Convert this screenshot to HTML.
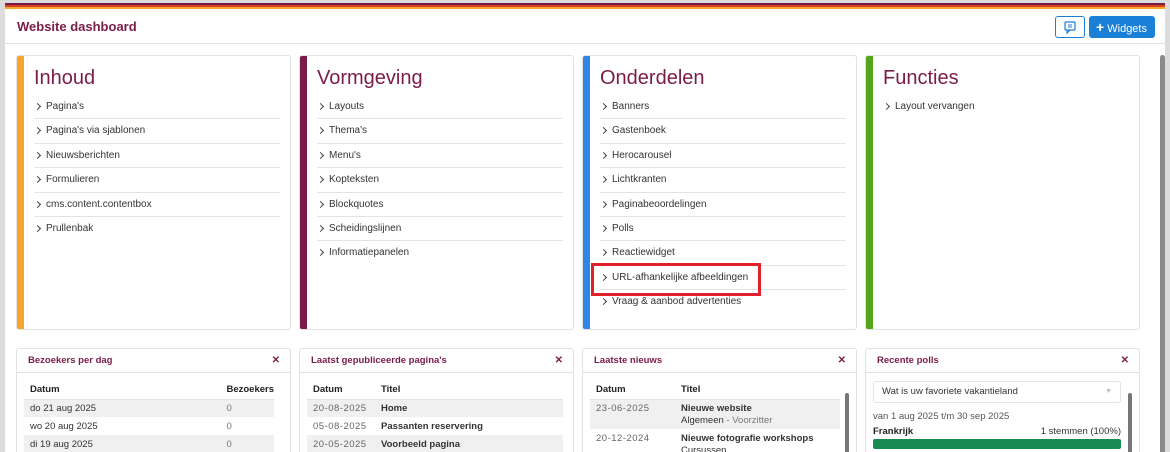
<!DOCTYPE html>
<html><head><style>
*{box-sizing:border-box;margin:0;padding:0}
html,body{width:1170px;height:452px;overflow:hidden}
body{background:#dcdcdc;font-family:"Liberation Sans",Arial,sans-serif;position:relative}
.panel{position:absolute;left:5px;top:3px;width:1160px;height:449px;background:#fff}
.s1{position:absolute;left:0;top:0;width:1160px;height:2px;background:#7a1c48}
.s2{position:absolute;left:0;top:2px;width:1160px;height:2px;background:#d4431e}
.s3{position:absolute;left:0;top:4px;width:1160px;height:2px;background:#f6a62a}
.hdr{position:absolute;left:0;top:6px;width:1160px;height:35px;border-bottom:1px solid #e2e2e2}
.hdr h1{position:absolute;left:12px;top:10px;font-size:13px;font-weight:bold;color:#7a1c48}
.b1{position:absolute;left:1050px;top:7px;width:30px;height:22px;border:1px solid #1a7fd6;border-radius:3px}
.b2{position:absolute;left:1084px;top:7px;width:66px;height:22px;background:#1a7fd6;border-radius:3px;color:#fff;font-size:11px;line-height:22px;padding-left:7px}
.sb{position:absolute;left:1155px;top:52px;width:5px;height:400px;background:#8a8a8a;border-radius:3px}
.card{position:absolute;top:55px;width:275px;height:275px;border:1px solid #e2e2e2;border-radius:3px;background:#fff;overflow:hidden}
.card .bar{position:absolute;left:0;top:0;width:7px;height:100%}
.card h2{position:absolute;left:17px;top:11px;font-size:20px;font-weight:normal;color:#7a1c48}
.card ul{position:absolute;left:17px;top:39px;width:246px;list-style:none}
.card li{height:24.4px;border-bottom:1px solid #e4e4e4;font-size:10px;color:#333;line-height:23px;padding-left:12px;position:relative}
.card li:last-child{border-bottom:none}
.card li:before{content:"";position:absolute;left:1px;top:9px;width:4px;height:4px;border-right:1px solid #444;border-top:1px solid #444;transform:rotate(45deg)}
.w{position:absolute;top:348px;width:275px;height:110px;border:1px solid #e2e2e2;border-radius:3px;background:#fff;overflow:hidden}
.w .wh{height:24px;border-bottom:1px solid #e2e2e2;font-size:9.5px;font-weight:bold;color:#7a1c48;line-height:23px;padding-left:11px;position:relative}
.w .wh span{position:absolute;right:10px;top:0;font-size:10px}
table{position:absolute;left:7px;top:32px;border-collapse:collapse;font-size:9.5px;color:#333}
td,th{height:18px;padding-left:6px;text-align:left}
th{font-weight:bold;color:#222;border-bottom:1px solid #e2e2e2}
tr.g td{background:#f0f0f0}
.dt{color:#666;letter-spacing:.5px}
</style></head><body>
<div class="panel">
<div class="s1"></div><div class="s2"></div><div class="s3"></div>
<div class="hdr"><h1>Website dashboard</h1>
<div class="b1"><svg width="28" height="20" viewBox="0 0 28 20"><rect x="9" y="5" width="10" height="8" rx="1" fill="none" stroke="#1a7fd6" stroke-width="1.2"/><path d="M11 13v3l3-3" fill="none" stroke="#1a7fd6" stroke-width="1.2"/><path d="M12 8h4M12 10h4" stroke="#1a7fd6"/></svg></div>
<div class="b2"><b style="font-size:14px">+</b> Widgets</div></div>
<div class="sb"></div>
</div>

<div class="card" style="left:16px"><div class="bar" style="background:#f6a62a"></div><h2>Inhoud</h2><ul><li>Pagina's</li><li>Pagina's via sjablonen</li><li>Nieuwsberichten</li><li>Formulieren</li><li>cms.content.contentbox</li><li>Prullenbak</li></ul></div>
<div class="card" style="left:299px"><div class="bar" style="background:#7a1c48"></div><h2>Vormgeving</h2><ul><li>Layouts</li><li>Thema's</li><li>Menu's</li><li>Kopteksten</li><li>Blockquotes</li><li>Scheidingslijnen</li><li>Informatiepanelen</li></ul></div>
<div class="card" style="left:582px"><div class="bar" style="background:#2f86e6"></div><h2>Onderdelen</h2><ul><li>Banners</li><li>Gastenboek</li><li>Herocarousel</li><li>Lichtkranten</li><li>Paginabeoordelingen</li><li>Polls</li><li>Reactiewidget</li><li>URL-afhankelijke afbeeldingen</li><li>Vraag &amp; aanbod advertenties</li></ul></div>
<div class="card" style="left:865px"><div class="bar" style="background:#55a51c"></div><h2>Functies</h2><ul><li>Layout vervangen</li></ul></div>
<div style="position:absolute;left:591px;top:263px;width:170px;height:33px;border:3px solid #e0202a"></div>

<div class="w" style="left:16px"><div class="wh">Bezoekers per dag<span>✕</span></div>
<table style="width:250px"><tr><th>Datum</th><th style="width:50px">Bezoekers</th></tr><tr class="g"><td>do 21 aug 2025</td><td style="color:#777">0</td></tr><tr><td>wo 20 aug 2025</td><td style="color:#777">0</td></tr><tr class="g"><td>di 19 aug 2025</td><td style="color:#777">0</td></tr></table></div>
<div class="w" style="left:299px"><div class="wh">Laatst gepubliceerde pagina's<span>✕</span></div>
<table style="width:256px"><tr><th style="width:68px">Datum</th><th>Titel</th></tr><tr class="g"><td class="dt">20-08-2025</td><td><b>Home</b></td></tr><tr><td class="dt">05-08-2025</td><td><b>Passanten reservering</b></td></tr><tr class="g"><td class="dt">20-05-2025</td><td><b>Voorbeeld pagina</b></td></tr></table></div>
<div class="w" style="left:582px"><div class="wh">Laatste nieuws<span>✕</span></div>
<table style="width:250px"><tr><th style="width:85px">Datum</th><th>Titel</th></tr><tr class="g"><td class="dt" style="vertical-align:top;padding-top:3px">23-06-2025</td><td style="padding:3px 6px 2px;line-height:12px"><b>Nieuwe website</b><br>Algemeen <span style="color:#777">- Voorzitter</span></td></tr><tr><td class="dt" style="vertical-align:top;padding-top:4px">20-12-2024</td><td style="padding:4px 6px 0;line-height:12px"><b>Nieuwe fotografie workshops</b><br>Cursussen</td></tr></table>
<div style="position:absolute;left:262px;top:44px;width:4px;height:80px;background:#777;border-radius:2px"></div></div>
<div class="w" style="left:865px"><div class="wh">Recente polls<span>✕</span></div>
<div style="position:absolute;left:7px;top:32px;width:248px;height:22px;border:1px solid #e4e4e4;border-radius:3px;font-size:9.5px;color:#333;line-height:20px;padding-left:8px">Wat is uw favoriete vakantieland<span style="position:absolute;right:8px;color:#bbb;font-size:7px">▼</span></div>
<div style="position:absolute;left:7px;top:62px;font-size:9.5px;color:#555">van 1 aug 2025 t/m 30 sep 2025</div>
<div style="position:absolute;left:7px;top:77px;width:248px;font-size:9.5px;color:#222"><b>Frankrijk</b><span style="float:right;color:#333">1 stemmen (100%)</span></div>
<div style="position:absolute;left:7px;top:90px;width:248px;height:10px;background:#1a8a55;border-radius:2px"></div>
<div style="position:absolute;left:262px;top:44px;width:4px;height:80px;background:#777;border-radius:2px"></div></div>
</body></html>
